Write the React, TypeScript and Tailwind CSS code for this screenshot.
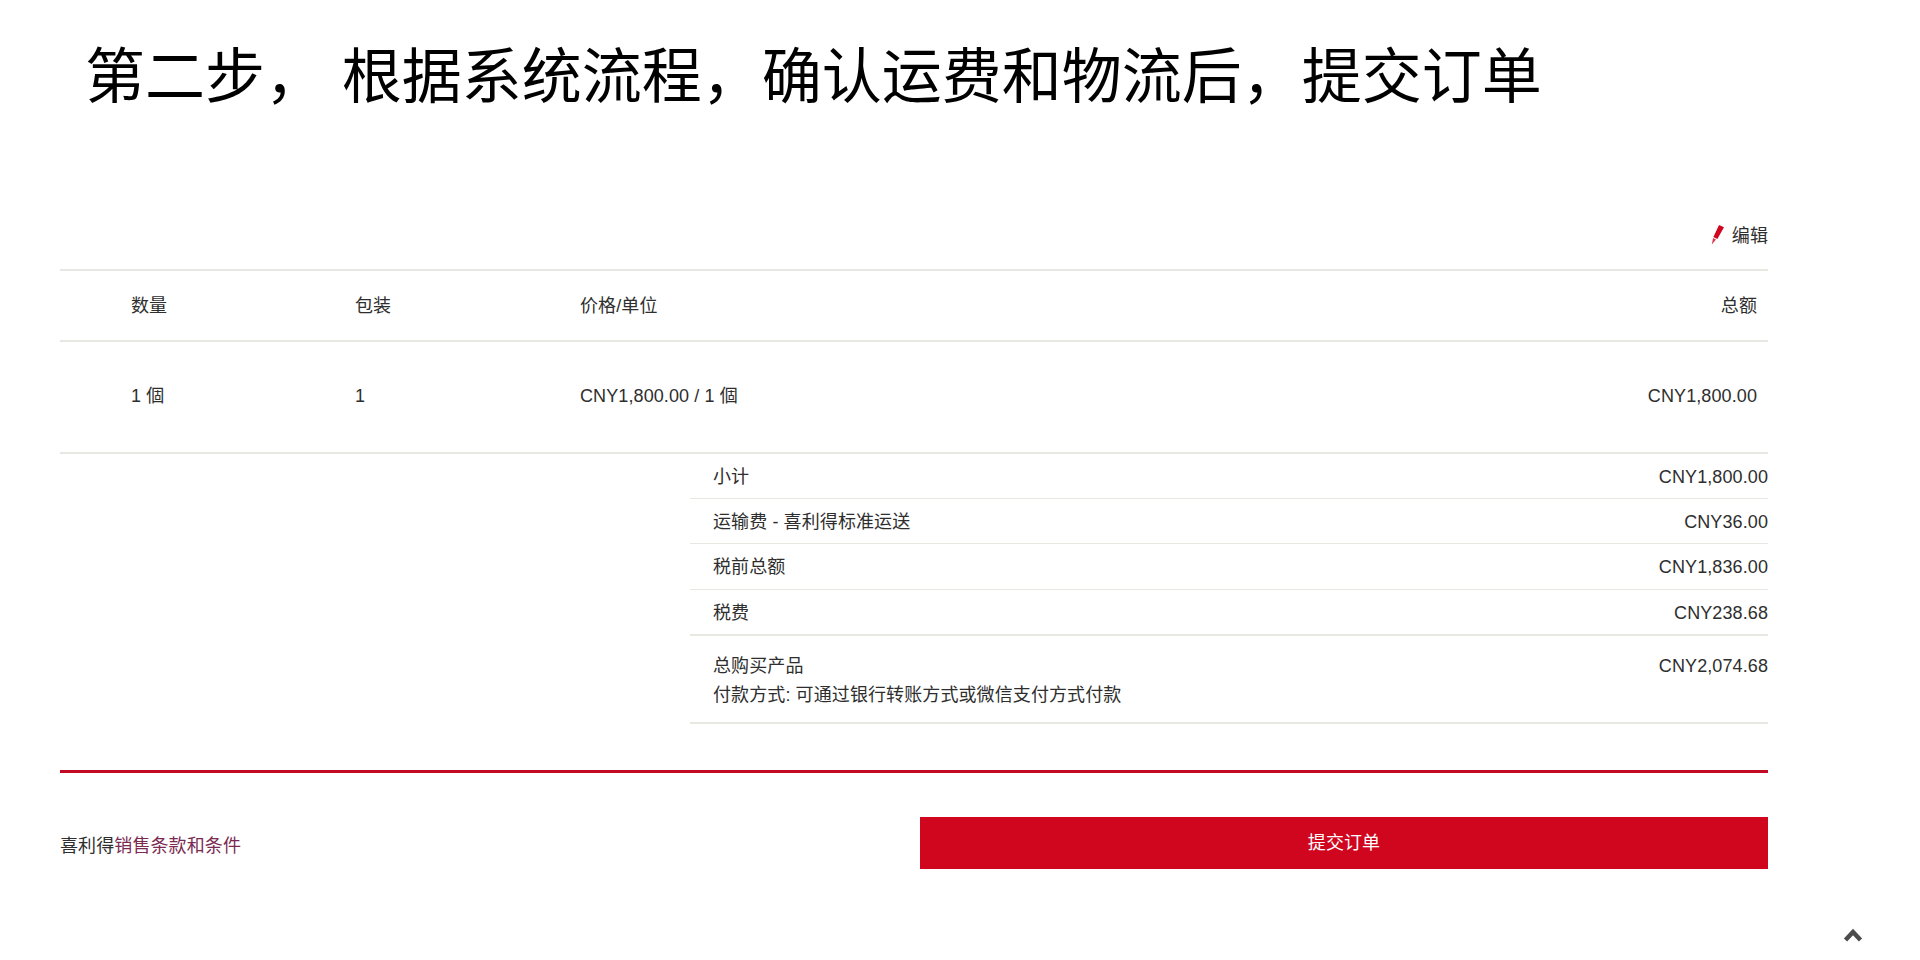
const FONT = "font-['Liberation_Sans','Noto_Sans_CJK_SC',sans-serif]";

function SummaryRow({ label, value, border = "border-b", height = "h-[45px]" }: { label: string; value: string; border?: string; height?: string }) {
  return (
    <div className={`flex items-center justify-between pl-[23px] pt-[1px] ${height} ${border} border-[#e9e7e2]`}>
      <span>{label}</span>
      <span>{value}</span>
    </div>
  );
}

export default function App() {
  return (
    <div className={`relative h-[960px] w-[1920px] overflow-hidden bg-white text-[18px] leading-[24px] tracking-[0.1px] text-[#2e2e2e] ${FONT}`}>
      <h1 className="flex h-[142px] items-center pl-[85px] pt-[14px] text-[60px] font-normal leading-none tracking-normal text-black">
        第二步， 根据系统流程，确认运费和物流后，提交订单
      </h1>

      <main className="mx-[60px] w-[1708px]">
        <div className="flex h-[127px] items-end justify-end gap-[8px] pb-[21px]">
          <svg className="mb-[3px]" width="13" height="20" viewBox="0 0 13 20" aria-hidden="true">
            <path d="M8 0 L13 2.2 L6.4 14 L2.4 12 Z" fill="#d0061f" />
            <path d="M2.1 13 L5 14.6 L0.8 19.5 Z" fill="#d0061f" opacity="0.8" />
          </svg>
          <span>编辑</span>
        </div>

        <div className="flex h-[73px] items-center border-y-2 border-[#e9e7e2] pl-[71px] pr-[11px]">
          <span className="w-[224px]">数量</span>
          <span className="w-[225px]">包装</span>
          <span className="flex-1">价格/单位</span>
          <span>总额</span>
        </div>

        <div className="flex h-[112px] items-center border-b-2 border-[#e9e7e2] pb-[2px] pl-[71px] pr-[11px]">
          <span className="w-[224px]">1 個</span>
          <span className="w-[225px]">1</span>
          <span className="flex-1">CNY1,800.00 / 1 個</span>
          <span>CNY1,800.00</span>
        </div>

        <section className="ml-[630px]">
          <SummaryRow label="小计" value="CNY1,800.00" height="h-[45px]" />
          <SummaryRow label="运输费 - 喜利得标准运送" value="CNY36.00" />
          <SummaryRow label="税前总额" value="CNY1,836.00" height="h-[46px]" />
          <SummaryRow label="税费" value="CNY238.68" border="border-b-2" height="h-[46px]" />
          <div className="flex h-[88px] items-start justify-between border-b-2 border-[#e9e7e2] pl-[23px] pt-[18px]">
            <div className="flex flex-col gap-[5px]">
              <span>总购买产品</span>
              <span>付款方式: 可通过银行转账方式或微信支付方式付款</span>
            </div>
            <span>CNY2,074.68</span>
          </div>
        </section>

        <div className="mt-[46px] h-[3px] bg-[#c20a25]" />

        <div className="mt-[44px] flex h-[52px] items-center justify-between">
          <p className="pt-[5px]">
            喜利得<a className="text-[#7b2a52]">销售条款和条件</a>
          </p>
          <button className="flex h-[52px] w-[848px] items-center justify-center bg-[#d0061f] text-white">提交订单</button>
        </div>
      </main>

      <svg className="absolute left-[1843px] top-[928px]" width="20" height="15" viewBox="0 0 20 15" aria-hidden="true">
        <path d="M2.5 12 L10 4 L17.5 12" fill="none" stroke="#4d4d4d" strokeWidth="4.5" strokeLinejoin="miter" />
      </svg>
    </div>
  );
}
